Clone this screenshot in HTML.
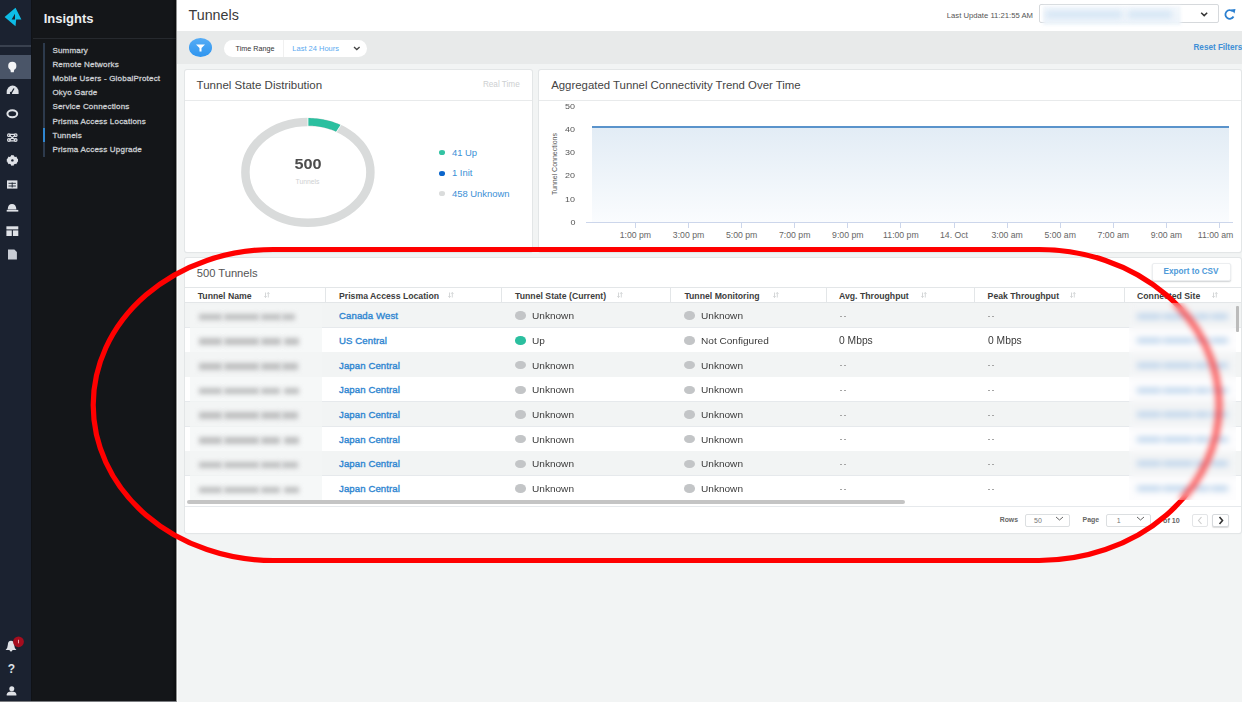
<!DOCTYPE html><html><head><meta charset="utf-8"><style>
html,body{margin:0;padding:0;width:1242px;height:702px;overflow:hidden;background:#f2f4f4;font-family:"Liberation Sans", sans-serif;}
.t{position:absolute;white-space:nowrap;font-family:"Liberation Sans", sans-serif;}
.r{position:absolute;}
svg{position:absolute;overflow:visible;}
</style></head><body><div id="root" style="position:absolute;left:0;top:0;width:1242px;height:702px;overflow:hidden;background:#f2f4f4">
<div class="r" style="left:0.00px;top:0.00px;width:31.00px;height:702.00px;background:#1b2230;"></div>
<div class="r" style="left:31.00px;top:0.00px;width:1.00px;height:702.00px;background:#101216;"></div>
<svg style="left:0;top:0" width="31" height="40"><path d="M4.6 17.1 L15.5 7.7 L21.4 19.6 L16.2 19.6 L15.5 26.2 Z M15 13.7 L11.6 19.6 L15 19.6 Z" fill="#0dbce6" fill-rule="evenodd"/></svg>
<div class="r" style="left:0.00px;top:45.00px;width:31.00px;height:2.00px;background:#39414f;"></div>
<div class="r" style="left:0.00px;top:55.10px;width:31.00px;height:23.60px;background:#4a5568;"></div>
<svg style="left:0;top:0" width="31" height="702"><circle cx="12.3" cy="65.9" r="4.1" fill="#f4f5f7"/><path d="M10.2 68.2 L14.4 68.2 L13.8 72.2 L10.8 72.2 Z" fill="#f4f5f7"/><path d="M6.7 94.1 L6.7 92 A5.9 6.4 0 0 1 18.6 92 L18.6 94.1 Z" fill="#dfe2e7"/><path d="M11 93.5 L14 88.5" stroke="#1b2230" stroke-width="1.3"/><circle cx="11" cy="93" r="1.2" fill="#1b2230"/><ellipse cx="12.3" cy="113.7" rx="4.9" ry="3.5" fill="none" stroke="#dfe2e7" stroke-width="2"/><g fill="none" stroke="#dfe2e7" stroke-width="1.2"><path d="M9.3 135.3 L15.3 139.9 M15.3 135.3 L9.3 139.9 M9.6 134.3 L15 134.3 M9.6 140.9 L15 140.9"/><circle cx="8.9" cy="135.2" r="1.3"/><circle cx="15.7" cy="135.2" r="1.3"/><circle cx="8.9" cy="140" r="1.3"/><circle cx="15.7" cy="140" r="1.3"/></g><g fill="#dfe2e7"><circle cx="12.4" cy="160.4" r="4.3"/><rect x="11" y="155.2" width="2.8" height="10.4"/><rect x="6.8" y="159" width="11.2" height="2.8"/><rect x="11" y="155.2" width="2.8" height="10.4" transform="rotate(60 12.4 160.4)"/><rect x="11" y="155.2" width="2.8" height="10.4" transform="rotate(-60 12.4 160.4)"/></g><circle cx="12.4" cy="160.4" r="1.2" fill="#1b2230"/><rect x="7" y="180.4" width="10.4" height="8.2" fill="#dfe2e7"/><path d="M8.5 183.3 L15.9 183.3 M8.5 186 L15.9 186 M12.2 182.5 L12.2 187.5" stroke="#1b2230" stroke-width="0.9"/><path d="M7.7 209.4 Q8 204 12 204 Q16 204 16.4 209.4 Z" fill="#dfe2e7"/><rect x="6.7" y="209.9" width="11.6" height="1.7" fill="#dfe2e7"/><rect x="6.4" y="226.3" width="11.9" height="3.1" fill="#dfe2e7"/><rect x="6.4" y="230.4" width="5.4" height="5.6" fill="#dfe2e7"/><rect x="12.9" y="230.4" width="5.4" height="5.6" fill="#dfe2e7"/><path d="M8 249.4 L14.4 249.4 L16.9 251.9 L16.9 259.6 L8 259.6 Z" fill="#c9cdd5"/><path d="M5.6 650 Q7.6 648.5 7.8 645 Q8 640.8 11 640.8 Q14 640.8 14.2 645 Q14.4 648.5 16.4 650 Z" fill="#dfe2e7"/><circle cx="11" cy="650.3" r="1.2" fill="#dfe2e7"/><circle cx="18.5" cy="641.8" r="5.4" fill="#a50d1e"/><rect x="18" y="639.8" width="1" height="3.5" fill="#e5a5ad"/><text x="11.3" y="673.1" font-size="12" text-anchor="middle" font-family="Liberation Sans" font-weight="700" fill="#dfe2e7">?</text><circle cx="11.8" cy="688.8" r="2.5" fill="#dfe2e7"/><path d="M6.7 695.6 L6.7 694.5 Q7 691.5 11.6 691.5 Q16.2 691.5 16.4 694.5 L16.4 695.6 Z" fill="#dfe2e7"/></svg>
<div class="r" style="left:0.00px;top:700.60px;width:31.00px;height:1.40px;background:#5a5d63;"></div>
<div class="r" style="left:32.00px;top:0.00px;width:144.00px;height:702.00px;background:#141619;"></div>
<div class="t" style="left:43.70px;top:12.00px;font-size:13px;line-height:13px;font-weight:700;color:#eceef0;">Insights</div>
<div class="r" style="left:33.00px;top:38.00px;width:143.00px;height:1.20px;background:#26292e;"></div>
<div class="r" style="left:43.30px;top:43.30px;width:1.70px;height:113.50px;background:#2d3a4c;"></div>
<div class="r" style="left:43.30px;top:128.00px;width:1.70px;height:14.00px;background:#2f86d1;"></div>
<div class="t" style="left:52.40px;top:47.00px;font-size:8.0px;line-height:8.0px;font-weight:400;color:#c9ccd0;-webkit-text-stroke:0.3px #c9ccd0;letter-spacing:0.2px;">Summary</div>
<div class="t" style="left:52.40px;top:61.10px;font-size:8.0px;line-height:8.0px;font-weight:400;color:#c9ccd0;-webkit-text-stroke:0.3px #c9ccd0;letter-spacing:0.2px;">Remote Networks</div>
<div class="t" style="left:52.40px;top:75.20px;font-size:8.0px;line-height:8.0px;font-weight:400;color:#c9ccd0;-webkit-text-stroke:0.3px #c9ccd0;letter-spacing:0.2px;">Mobile Users - GlobalProtect</div>
<div class="t" style="left:52.40px;top:89.30px;font-size:8.0px;line-height:8.0px;font-weight:400;color:#c9ccd0;-webkit-text-stroke:0.3px #c9ccd0;letter-spacing:0.2px;">Okyo Garde</div>
<div class="t" style="left:52.40px;top:103.40px;font-size:8.0px;line-height:8.0px;font-weight:400;color:#c9ccd0;-webkit-text-stroke:0.3px #c9ccd0;letter-spacing:0.2px;">Service Connections</div>
<div class="t" style="left:52.40px;top:117.50px;font-size:8.0px;line-height:8.0px;font-weight:400;color:#c9ccd0;-webkit-text-stroke:0.3px #c9ccd0;letter-spacing:0.2px;">Prisma Access Locations</div>
<div class="t" style="left:52.40px;top:131.60px;font-size:8.0px;line-height:8.0px;font-weight:400;color:#c9ccd0;-webkit-text-stroke:0.3px #c9ccd0;letter-spacing:0.2px;">Tunnels</div>
<div class="t" style="left:52.40px;top:145.70px;font-size:8.0px;line-height:8.0px;font-weight:400;color:#c9ccd0;-webkit-text-stroke:0.3px #c9ccd0;letter-spacing:0.2px;">Prisma Access Upgrade</div>
<div class="r" style="left:172px;top:0;width:4.5px;height:702px;background:linear-gradient(90deg,rgba(0,0,0,0),rgba(0,0,0,0.45))"></div>
<div class="r" style="left:176.50px;top:0.00px;width:1.10px;height:702.00px;background:#fbfcfc;"></div>
<div class="r" style="left:177.00px;top:0.00px;width:1065.00px;height:31.00px;background:#ffffff;"></div>
<div class="t" style="left:188.50px;top:8.15px;font-size:14.3px;line-height:14.3px;font-weight:400;color:#3a3a3a;">Tunnels</div>
<div class="t" style="left:946.80px;top:12.15px;font-size:7.7px;line-height:7.7px;font-weight:400;color:#555;">Last Update 11:21:55 AM</div>
<div class="r" style="left:1039.40px;top:4.30px;width:179.20px;height:18.70px;background:#fff;border:1px solid #d6d9dc;border-radius:2px;box-sizing:border-box;"></div>
<div class="r" style="left:1043px;top:6px;width:138px;height:19px;background:linear-gradient(#f4f8fc,#eef4fa);filter:blur(1.5px)"></div>
<div class="r" style="left:1046px;top:10.5px;width:76px;height:7px;background:#d3e4f4;filter:blur(3px)"></div>
<div class="r" style="left:1128px;top:10.5px;width:44px;height:7px;background:#d3e4f4;filter:blur(3px)"></div>
<svg style="left:1200px;top:11.8px" width="9" height="5"><path d="M1.2 0.8 L4.2 3.6 L7.2 0.8" fill="none" stroke="#333" stroke-width="1.5"/></svg>
<svg style="left:1223px;top:8px" width="14" height="13"><path d="M10.5 8.5 A4.3 4.3 0 1 1 9.8 3.5" fill="none" stroke="#2a7fd0" stroke-width="1.8"/><path d="M8 1.5 L12.5 1 L11.5 5.5 Z" fill="#2a7fd0"/></svg>
<div class="r" style="left:177.00px;top:31.00px;width:1065.00px;height:33.00px;background:#e8eaea;"></div>
<div class="r" style="left:188.5px;top:38.2px;width:23.7px;height:19px;border-radius:50%;background:linear-gradient(#55acf5,#2f95ef)"></div>
<svg style="left:194px;top:43px" width="13" height="10"><path d="M2 1.5 L11 1.5 L7.5 5 L7.5 8.5 L5.5 8.5 L5.5 5 Z" fill="#fff"/></svg>
<div class="r" style="left:223.80px;top:39.70px;width:143.00px;height:17.10px;background:#fff;border-radius:9px;"></div>
<div class="r" style="left:283.00px;top:39.70px;width:1.00px;height:17.10px;background:#f0f0f0;"></div>
<div class="t" style="left:235.60px;top:44.60px;font-size:7.2px;line-height:7.2px;font-weight:400;color:#333;">Time Range</div>
<div class="t" style="left:292.30px;top:45.15px;font-size:7.5px;line-height:7.5px;font-weight:400;color:#5aaaf0;">Last 24 Hours</div>
<svg style="left:352.5px;top:46.3px" width="8" height="5"><path d="M1 1 L3.8 3.6 L6.6 1" fill="none" stroke="#444" stroke-width="1.3"/></svg>
<div class="t" style="left:1193.50px;top:43.72px;font-size:8.15px;line-height:8.15px;font-weight:700;color:#3f8fd6;">Reset Filters</div>
<div class="r" style="left:184.50px;top:69.70px;width:347.50px;height:182.30px;background:#fff;border-radius:2px;box-shadow:0 0 0 1px #e3e6e7, 0 1px 1px #dcdfe0;"></div>
<div class="r" style="left:184.50px;top:99.50px;width:347.50px;height:1.20px;background:#e8eaeb;"></div>
<div class="t" style="left:196.60px;top:79.55px;font-size:11.5px;line-height:11.5px;font-weight:400;color:#444;">Tunnel State Distribution</div>
<div class="t" style="left:482.90px;top:81.00px;font-size:8.2px;line-height:8.2px;font-weight:400;color:#cdcfd1;">Real Time</div>
<svg style="left:0;top:0" width="1242" height="702"><ellipse cx="307.9" cy="172.3" rx="62.5" ry="50.4" fill="none" stroke="#d9dbdb" stroke-width="8.5"/></svg>
<svg style="left:0;top:0" width="1242" height="702"><polygon points="307.90,118.10 309.63,118.12 311.36,118.17 313.08,118.26 314.80,118.39 316.52,118.55 318.23,118.75 319.93,118.98 321.63,119.25 323.32,119.55 325.00,119.89 326.66,120.26 328.31,120.67 329.95,121.11 331.58,121.59 333.19,122.10 334.78,122.64 336.36,123.21 337.91,123.82 339.45,124.46 340.96,125.14 336.43,131.75 335.12,131.17 333.80,130.62 332.45,130.10 331.10,129.60 329.72,129.14 328.33,128.70 326.93,128.29 325.52,127.91 324.09,127.56 322.65,127.24 321.20,126.95 319.75,126.69 318.28,126.46 316.81,126.26 315.34,126.09 313.86,125.95 312.37,125.84 310.88,125.76 309.39,125.72 307.90,125.70" fill="#2bbf9f"/><line x1="307.90" y1="117.10" x2="307.90" y2="126.70" stroke="#fff" stroke-width="0.9"/><line x1="341.41" y1="124.27" x2="335.99" y2="132.62" stroke="#fff" stroke-width="0.9"/></svg>
<div class="t" style="left:307.50px;width:0;display:flex;justify-content:center;top:156.50px;font-size:14px;line-height:14px;font-weight:700;color:#4d4d4d;transform:scaleX(1.16);">500</div>
<div class="t" style="left:307.50px;width:0;display:flex;justify-content:center;top:179.00px;font-size:6.8px;line-height:6.8px;font-weight:400;color:#cfd1d2;">Tunnels</div>
<div class="r" style="left:438.8px;top:150.40px;width:6.5px;height:5.1px;border-radius:50%;background:#33c3a3"></div>
<div class="t" style="left:451.90px;top:148.08px;font-size:9.45px;line-height:9.45px;font-weight:400;color:#3b8fd6;">41 Up</div>
<div class="r" style="left:438.8px;top:170.80px;width:6.5px;height:5.1px;border-radius:50%;background:#0b66cc"></div>
<div class="t" style="left:451.90px;top:168.48px;font-size:9.45px;line-height:9.45px;font-weight:400;color:#3b8fd6;">1 Init</div>
<div class="r" style="left:438.8px;top:191.20px;width:6.5px;height:5.1px;border-radius:50%;background:#dadcdc"></div>
<div class="t" style="left:451.90px;top:188.88px;font-size:9.45px;line-height:9.45px;font-weight:400;color:#3b8fd6;">458 Unknown</div>
<div class="r" style="left:539.30px;top:69.70px;width:701.90px;height:182.30px;background:#fff;border-radius:2px;box-shadow:0 0 0 1px #e3e6e7, 0 1px 1px #dcdfe0;"></div>
<div class="r" style="left:539.30px;top:99.50px;width:701.90px;height:1.20px;background:#e8eaeb;"></div>
<div class="t" style="left:551.20px;top:80.00px;font-size:11.4px;line-height:11.4px;font-weight:400;color:#444;">Aggregated Tunnel Connectivity Trend Over Time</div>
<div class="t" style="right:667.00px;top:103.00px;font-size:8px;line-height:8px;font-weight:400;color:#555;transform:scaleX(1.12);transform-origin:100% 0;">50</div>
<div class="t" style="right:667.00px;top:126.14px;font-size:8px;line-height:8px;font-weight:400;color:#555;transform:scaleX(1.12);transform-origin:100% 0;">40</div>
<div class="t" style="right:667.00px;top:149.28px;font-size:8px;line-height:8px;font-weight:400;color:#555;transform:scaleX(1.12);transform-origin:100% 0;">30</div>
<div class="t" style="right:667.00px;top:172.42px;font-size:8px;line-height:8px;font-weight:400;color:#555;transform:scaleX(1.12);transform-origin:100% 0;">20</div>
<div class="t" style="right:667.00px;top:195.56px;font-size:8px;line-height:8px;font-weight:400;color:#555;transform:scaleX(1.12);transform-origin:100% 0;">10</div>
<div class="t" style="right:667.00px;top:218.70px;font-size:8px;line-height:8px;font-weight:400;color:#555;transform:scaleX(1.12);transform-origin:100% 0;">0</div>
<div class="t" style="left:555px;top:164px;font-size:8px;line-height:8px;color:#555;transform:translate(-50%,-50%) rotate(-90deg) scaleX(0.875);">Tunnel Connections</div>
<div class="r" style="left:591.5px;top:127px;width:637px;height:95px;background:linear-gradient(#e2ecf5,#fafcfe)"></div>
<div class="r" style="left:591.50px;top:126.40px;width:637.20px;height:1.40px;background:#5a93cb;"></div>
<div class="r" style="left:586.30px;top:221.60px;width:646.70px;height:1.00px;background:#ccd6eb;"></div>
<div class="r" style="left:634.90px;top:222.60px;width:1.00px;height:5.00px;background:#ccd6eb;"></div>
<div class="t" style="left:635.40px;width:0;display:flex;justify-content:center;top:230.55px;font-size:8.7px;line-height:8.7px;font-weight:400;color:#666;">1:00 pm</div>
<div class="r" style="left:688.00px;top:222.60px;width:1.00px;height:5.00px;background:#ccd6eb;"></div>
<div class="t" style="left:688.50px;width:0;display:flex;justify-content:center;top:230.55px;font-size:8.7px;line-height:8.7px;font-weight:400;color:#666;">3:00 pm</div>
<div class="r" style="left:741.10px;top:222.60px;width:1.00px;height:5.00px;background:#ccd6eb;"></div>
<div class="t" style="left:741.60px;width:0;display:flex;justify-content:center;top:230.55px;font-size:8.7px;line-height:8.7px;font-weight:400;color:#666;">5:00 pm</div>
<div class="r" style="left:794.20px;top:222.60px;width:1.00px;height:5.00px;background:#ccd6eb;"></div>
<div class="t" style="left:794.70px;width:0;display:flex;justify-content:center;top:230.55px;font-size:8.7px;line-height:8.7px;font-weight:400;color:#666;">7:00 pm</div>
<div class="r" style="left:847.30px;top:222.60px;width:1.00px;height:5.00px;background:#ccd6eb;"></div>
<div class="t" style="left:847.80px;width:0;display:flex;justify-content:center;top:230.55px;font-size:8.7px;line-height:8.7px;font-weight:400;color:#666;">9:00 pm</div>
<div class="r" style="left:900.40px;top:222.60px;width:1.00px;height:5.00px;background:#ccd6eb;"></div>
<div class="t" style="left:900.90px;width:0;display:flex;justify-content:center;top:230.55px;font-size:8.7px;line-height:8.7px;font-weight:400;color:#666;">11:00 pm</div>
<div class="r" style="left:953.50px;top:222.60px;width:1.00px;height:5.00px;background:#ccd6eb;"></div>
<div class="t" style="left:954.00px;width:0;display:flex;justify-content:center;top:230.55px;font-size:8.7px;line-height:8.7px;font-weight:400;color:#666;">14. Oct</div>
<div class="r" style="left:1006.60px;top:222.60px;width:1.00px;height:5.00px;background:#ccd6eb;"></div>
<div class="t" style="left:1007.10px;width:0;display:flex;justify-content:center;top:230.55px;font-size:8.7px;line-height:8.7px;font-weight:400;color:#666;">3:00 am</div>
<div class="r" style="left:1059.70px;top:222.60px;width:1.00px;height:5.00px;background:#ccd6eb;"></div>
<div class="t" style="left:1060.20px;width:0;display:flex;justify-content:center;top:230.55px;font-size:8.7px;line-height:8.7px;font-weight:400;color:#666;">5:00 am</div>
<div class="r" style="left:1112.80px;top:222.60px;width:1.00px;height:5.00px;background:#ccd6eb;"></div>
<div class="t" style="left:1113.30px;width:0;display:flex;justify-content:center;top:230.55px;font-size:8.7px;line-height:8.7px;font-weight:400;color:#666;">7:00 am</div>
<div class="r" style="left:1165.90px;top:222.60px;width:1.00px;height:5.00px;background:#ccd6eb;"></div>
<div class="t" style="left:1166.40px;width:0;display:flex;justify-content:center;top:230.55px;font-size:8.7px;line-height:8.7px;font-weight:400;color:#666;">9:00 am</div>
<div class="r" style="left:1219.00px;top:222.60px;width:1.00px;height:5.00px;background:#ccd6eb;"></div>
<div class="t" style="left:1215.50px;width:0;display:flex;justify-content:center;top:230.55px;font-size:8.7px;line-height:8.7px;font-weight:400;color:#666;">11:00 am</div>
<div class="r" style="left:184.50px;top:257.80px;width:1056.70px;height:275.60px;background:#fff;border-radius:2px;box-shadow:0 0 0 1px #e3e6e7, 0 1px 1px #dcdfe0;"></div>
<div class="t" style="left:196.70px;top:268.00px;font-size:11.2px;line-height:11.2px;font-weight:400;color:#555;">500 Tunnels</div>
<div class="r" style="left:1151.70px;top:262.90px;width:79.30px;height:17.70px;background:#fff;border:1px solid #eceef0;border-radius:2px;box-sizing:border-box;box-shadow:0 1px 1.5px #cfd2d4;"></div>
<div class="t" style="left:1163.50px;top:268.20px;font-size:8.2px;line-height:8.2px;font-weight:700;color:#4f9ad9;">Export to CSV</div>
<div class="r" style="left:184.50px;top:286.70px;width:1056.70px;height:1.00px;background:#e3e6e8;"></div>
<div class="r" style="left:184.50px;top:302.50px;width:1056.70px;height:1.00px;background:#e3e6e8;"></div>
<div class="r" style="left:325.10px;top:287.70px;width:1.00px;height:14.80px;background:#e3e6e8;"></div>
<div class="r" style="left:501.10px;top:287.70px;width:1.00px;height:14.80px;background:#e3e6e8;"></div>
<div class="r" style="left:669.70px;top:287.70px;width:1.00px;height:14.80px;background:#e3e6e8;"></div>
<div class="r" style="left:825.90px;top:287.70px;width:1.00px;height:14.80px;background:#e3e6e8;"></div>
<div class="r" style="left:974.00px;top:287.70px;width:1.00px;height:14.80px;background:#e3e6e8;"></div>
<div class="r" style="left:1123.50px;top:287.70px;width:1.00px;height:14.80px;background:#e3e6e8;"></div>
<div class="t" style="left:197.70px;top:291.85px;font-size:8.7px;line-height:8.7px;font-weight:700;color:#3d3d3d;">Tunnel Name</div>
<svg style="left:264.10px;top:292.4px" width="6" height="6"><path d="M1.5 0.5 L1.5 5.5 M0.3 4.2 L1.5 5.5 L2.7 4.2 M4.3 5.5 L4.3 0.5 M3.1 1.8 L4.3 0.5 L5.5 1.8" fill="none" stroke="#d0d2d4" stroke-width="0.9"/></svg>
<div class="t" style="left:339.00px;top:291.85px;font-size:8.7px;line-height:8.7px;font-weight:700;color:#3d3d3d;">Prisma Access Location</div>
<svg style="left:448.40px;top:292.4px" width="6" height="6"><path d="M1.5 0.5 L1.5 5.5 M0.3 4.2 L1.5 5.5 L2.7 4.2 M4.3 5.5 L4.3 0.5 M3.1 1.8 L4.3 0.5 L5.5 1.8" fill="none" stroke="#d0d2d4" stroke-width="0.9"/></svg>
<div class="t" style="left:515.10px;top:291.85px;font-size:8.7px;line-height:8.7px;font-weight:700;color:#3d3d3d;">Tunnel State (Current)</div>
<svg style="left:617.30px;top:292.4px" width="6" height="6"><path d="M1.5 0.5 L1.5 5.5 M0.3 4.2 L1.5 5.5 L2.7 4.2 M4.3 5.5 L4.3 0.5 M3.1 1.8 L4.3 0.5 L5.5 1.8" fill="none" stroke="#d0d2d4" stroke-width="0.9"/></svg>
<div class="t" style="left:684.40px;top:291.85px;font-size:8.7px;line-height:8.7px;font-weight:700;color:#3d3d3d;">Tunnel Monitoring</div>
<svg style="left:772.50px;top:292.4px" width="6" height="6"><path d="M1.5 0.5 L1.5 5.5 M0.3 4.2 L1.5 5.5 L2.7 4.2 M4.3 5.5 L4.3 0.5 M3.1 1.8 L4.3 0.5 L5.5 1.8" fill="none" stroke="#d0d2d4" stroke-width="0.9"/></svg>
<div class="t" style="left:839.00px;top:291.85px;font-size:8.7px;line-height:8.7px;font-weight:700;color:#3d3d3d;">Avg. Throughput</div>
<svg style="left:921.30px;top:292.4px" width="6" height="6"><path d="M1.5 0.5 L1.5 5.5 M0.3 4.2 L1.5 5.5 L2.7 4.2 M4.3 5.5 L4.3 0.5 M3.1 1.8 L4.3 0.5 L5.5 1.8" fill="none" stroke="#d0d2d4" stroke-width="0.9"/></svg>
<div class="t" style="left:987.60px;top:291.85px;font-size:8.7px;line-height:8.7px;font-weight:700;color:#3d3d3d;">Peak Throughput</div>
<svg style="left:1070.30px;top:292.4px" width="6" height="6"><path d="M1.5 0.5 L1.5 5.5 M0.3 4.2 L1.5 5.5 L2.7 4.2 M4.3 5.5 L4.3 0.5 M3.1 1.8 L4.3 0.5 L5.5 1.8" fill="none" stroke="#d0d2d4" stroke-width="0.9"/></svg>
<div class="t" style="left:1137.00px;top:291.85px;font-size:8.7px;line-height:8.7px;font-weight:700;color:#3d3d3d;">Connected Site</div>
<svg style="left:1212.10px;top:292.4px" width="6" height="6"><path d="M1.5 0.5 L1.5 5.5 M0.3 4.2 L1.5 5.5 L2.7 4.2 M4.3 5.5 L4.3 0.5 M3.1 1.8 L4.3 0.5 L5.5 1.8" fill="none" stroke="#d0d2d4" stroke-width="0.9"/></svg>
<div class="r" style="left:184.50px;top:303.00px;width:1056.70px;height:24.70px;background:#f2f4f4;"></div>
<div class="r" style="left:184.50px;top:327.10px;width:1056.70px;height:1.00px;background:#e6e9ec;"></div>
<div class="r" style="left:184.50px;top:327.70px;width:1056.70px;height:24.70px;background:#ffffff;"></div>
<div class="r" style="left:184.50px;top:351.80px;width:1056.70px;height:1.00px;background:#e6e9ec;"></div>
<div class="r" style="left:184.50px;top:352.40px;width:1056.70px;height:24.70px;background:#f2f4f4;"></div>
<div class="r" style="left:184.50px;top:376.50px;width:1056.70px;height:1.00px;background:#e6e9ec;"></div>
<div class="r" style="left:184.50px;top:377.10px;width:1056.70px;height:24.70px;background:#ffffff;"></div>
<div class="r" style="left:184.50px;top:401.20px;width:1056.70px;height:1.00px;background:#e6e9ec;"></div>
<div class="r" style="left:184.50px;top:401.80px;width:1056.70px;height:24.70px;background:#f2f4f4;"></div>
<div class="r" style="left:184.50px;top:425.90px;width:1056.70px;height:1.00px;background:#e6e9ec;"></div>
<div class="r" style="left:184.50px;top:426.50px;width:1056.70px;height:24.70px;background:#ffffff;"></div>
<div class="r" style="left:184.50px;top:450.60px;width:1056.70px;height:1.00px;background:#e6e9ec;"></div>
<div class="r" style="left:184.50px;top:451.20px;width:1056.70px;height:24.70px;background:#f2f4f4;"></div>
<div class="r" style="left:184.50px;top:475.30px;width:1056.70px;height:1.00px;background:#e6e9ec;"></div>
<div class="r" style="left:184.50px;top:475.90px;width:1056.70px;height:24.70px;background:#ffffff;"></div>
<div class="r" style="left:184.50px;top:500.00px;width:1056.70px;height:1.00px;background:#e6e9ec;"></div>
<div class="r" style="left:184.50px;top:302.40px;width:1056.70px;height:1.00px;background:#e3e6e8;"></div>
<div class="r" style="left:190px;top:305px;width:132px;height:194.5px;background:rgba(243,245,245,0.75)"></div>
<div class="r" style="left:198.50px;top:313.60px;width:23px;height:6.5px;background:#bdbebf;filter:blur(2.6px)"></div>
<div class="r" style="left:223.50px;top:313.60px;width:35px;height:6.5px;background:#bdbebf;filter:blur(2.6px)"></div>
<div class="r" style="left:260.50px;top:313.60px;width:20px;height:6.5px;background:#bdbebf;filter:blur(2.6px)"></div>
<div class="r" style="left:281.50px;top:313.60px;width:13px;height:6.5px;background:#bdbebf;filter:blur(2.6px)"></div>
<div class="t" style="left:339.00px;top:311.10px;font-size:9.6px;line-height:9.6px;font-weight:400;color:#2f86d1;-webkit-text-stroke:0.35px #2f86d1;letter-spacing:0.1px;">Canada West</div>
<div class="r" style="left:515px;top:311.40px;width:10.5px;height:8.5px;border-radius:50%;background:#c3c5c7"></div>
<div class="t" style="left:531.60px;top:311.25px;font-size:9.9px;line-height:9.9px;font-weight:400;color:#3a3a3a;transform:scaleX(1.02);transform-origin:0 0;">Unknown</div>
<div class="r" style="left:684.4px;top:311.40px;width:10.5px;height:8.5px;border-radius:50%;background:#c3c5c7"></div>
<div class="t" style="left:701.40px;top:311.25px;font-size:9.9px;line-height:9.9px;font-weight:400;color:#3a3a3a;transform:scaleX(1.02);transform-origin:0 0;">Unknown</div>
<div class="r" style="left:839.60px;top:315.90px;width:2.00px;height:1.00px;background:#a5a5a5;"></div>
<div class="r" style="left:843.60px;top:315.90px;width:2.00px;height:1.00px;background:#a5a5a5;"></div>
<div class="r" style="left:988.20px;top:315.90px;width:2.00px;height:1.00px;background:#a5a5a5;"></div>
<div class="r" style="left:992.20px;top:315.90px;width:2.00px;height:1.00px;background:#a5a5a5;"></div>
<div class="r" style="left:198.50px;top:338.30px;width:23px;height:6.5px;background:#bdbebf;filter:blur(2.6px)"></div>
<div class="r" style="left:223.50px;top:338.30px;width:35px;height:6.5px;background:#bdbebf;filter:blur(2.6px)"></div>
<div class="r" style="left:260.50px;top:338.30px;width:20px;height:6.5px;background:#bdbebf;filter:blur(2.6px)"></div>
<div class="r" style="left:283.50px;top:338.30px;width:15px;height:6.5px;background:#bdbebf;filter:blur(2.6px)"></div>
<div class="t" style="left:339.00px;top:335.80px;font-size:9.6px;line-height:9.6px;font-weight:400;color:#2f86d1;-webkit-text-stroke:0.35px #2f86d1;letter-spacing:0.1px;">US Central</div>
<div class="r" style="left:515px;top:336.10px;width:10.5px;height:8.5px;border-radius:50%;background:#2bbf9f"></div>
<div class="t" style="left:531.60px;top:335.95px;font-size:9.9px;line-height:9.9px;font-weight:400;color:#3a3a3a;transform:scaleX(1.02);transform-origin:0 0;">Up</div>
<div class="r" style="left:684.4px;top:336.10px;width:10.5px;height:8.5px;border-radius:50%;background:#c3c5c7"></div>
<div class="t" style="left:701.40px;top:335.95px;font-size:9.9px;line-height:9.9px;font-weight:400;color:#3a3a3a;transform:scaleX(1.02);transform-origin:0 0;">Not Configured</div>
<div class="t" style="left:839.00px;top:335.85px;font-size:10.1px;line-height:10.1px;font-weight:400;color:#3a3a3a;transform:scaleX(1.02);transform-origin:0 0;">0 Mbps</div>
<div class="t" style="left:987.60px;top:335.85px;font-size:10.1px;line-height:10.1px;font-weight:400;color:#3a3a3a;transform:scaleX(1.02);transform-origin:0 0;">0 Mbps</div>
<div class="r" style="left:198.50px;top:363.00px;width:23px;height:6.5px;background:#bdbebf;filter:blur(2.6px)"></div>
<div class="r" style="left:223.50px;top:363.00px;width:35px;height:6.5px;background:#bdbebf;filter:blur(2.6px)"></div>
<div class="r" style="left:260.50px;top:363.00px;width:20px;height:6.5px;background:#bdbebf;filter:blur(2.6px)"></div>
<div class="r" style="left:281.50px;top:363.00px;width:16px;height:6.5px;background:#bdbebf;filter:blur(2.6px)"></div>
<div class="t" style="left:339.00px;top:360.50px;font-size:9.6px;line-height:9.6px;font-weight:400;color:#2f86d1;-webkit-text-stroke:0.35px #2f86d1;letter-spacing:0.1px;">Japan Central</div>
<div class="r" style="left:515px;top:360.80px;width:10.5px;height:8.5px;border-radius:50%;background:#c3c5c7"></div>
<div class="t" style="left:531.60px;top:360.65px;font-size:9.9px;line-height:9.9px;font-weight:400;color:#3a3a3a;transform:scaleX(1.02);transform-origin:0 0;">Unknown</div>
<div class="r" style="left:684.4px;top:360.80px;width:10.5px;height:8.5px;border-radius:50%;background:#c3c5c7"></div>
<div class="t" style="left:701.40px;top:360.65px;font-size:9.9px;line-height:9.9px;font-weight:400;color:#3a3a3a;transform:scaleX(1.02);transform-origin:0 0;">Unknown</div>
<div class="r" style="left:839.60px;top:365.30px;width:2.00px;height:1.00px;background:#a5a5a5;"></div>
<div class="r" style="left:843.60px;top:365.30px;width:2.00px;height:1.00px;background:#a5a5a5;"></div>
<div class="r" style="left:988.20px;top:365.30px;width:2.00px;height:1.00px;background:#a5a5a5;"></div>
<div class="r" style="left:992.20px;top:365.30px;width:2.00px;height:1.00px;background:#a5a5a5;"></div>
<div class="r" style="left:198.50px;top:387.70px;width:23px;height:6.5px;background:#bdbebf;filter:blur(2.6px)"></div>
<div class="r" style="left:223.50px;top:387.70px;width:35px;height:6.5px;background:#bdbebf;filter:blur(2.6px)"></div>
<div class="r" style="left:260.50px;top:387.70px;width:19px;height:6.5px;background:#bdbebf;filter:blur(2.6px)"></div>
<div class="r" style="left:283.50px;top:387.70px;width:15px;height:6.5px;background:#bdbebf;filter:blur(2.6px)"></div>
<div class="t" style="left:339.00px;top:385.20px;font-size:9.6px;line-height:9.6px;font-weight:400;color:#2f86d1;-webkit-text-stroke:0.35px #2f86d1;letter-spacing:0.1px;">Japan Central</div>
<div class="r" style="left:515px;top:385.50px;width:10.5px;height:8.5px;border-radius:50%;background:#c3c5c7"></div>
<div class="t" style="left:531.60px;top:385.35px;font-size:9.9px;line-height:9.9px;font-weight:400;color:#3a3a3a;transform:scaleX(1.02);transform-origin:0 0;">Unknown</div>
<div class="r" style="left:684.4px;top:385.50px;width:10.5px;height:8.5px;border-radius:50%;background:#c3c5c7"></div>
<div class="t" style="left:701.40px;top:385.35px;font-size:9.9px;line-height:9.9px;font-weight:400;color:#3a3a3a;transform:scaleX(1.02);transform-origin:0 0;">Unknown</div>
<div class="r" style="left:839.60px;top:390.00px;width:2.00px;height:1.00px;background:#a5a5a5;"></div>
<div class="r" style="left:843.60px;top:390.00px;width:2.00px;height:1.00px;background:#a5a5a5;"></div>
<div class="r" style="left:988.20px;top:390.00px;width:2.00px;height:1.00px;background:#a5a5a5;"></div>
<div class="r" style="left:992.20px;top:390.00px;width:2.00px;height:1.00px;background:#a5a5a5;"></div>
<div class="r" style="left:198.50px;top:412.40px;width:23px;height:6.5px;background:#bdbebf;filter:blur(2.6px)"></div>
<div class="r" style="left:223.50px;top:412.40px;width:35px;height:6.5px;background:#bdbebf;filter:blur(2.6px)"></div>
<div class="r" style="left:260.50px;top:412.40px;width:20px;height:6.5px;background:#bdbebf;filter:blur(2.6px)"></div>
<div class="r" style="left:281.50px;top:412.40px;width:16px;height:6.5px;background:#bdbebf;filter:blur(2.6px)"></div>
<div class="t" style="left:339.00px;top:409.90px;font-size:9.6px;line-height:9.6px;font-weight:400;color:#2f86d1;-webkit-text-stroke:0.35px #2f86d1;letter-spacing:0.1px;">Japan Central</div>
<div class="r" style="left:515px;top:410.20px;width:10.5px;height:8.5px;border-radius:50%;background:#c3c5c7"></div>
<div class="t" style="left:531.60px;top:410.05px;font-size:9.9px;line-height:9.9px;font-weight:400;color:#3a3a3a;transform:scaleX(1.02);transform-origin:0 0;">Unknown</div>
<div class="r" style="left:684.4px;top:410.20px;width:10.5px;height:8.5px;border-radius:50%;background:#c3c5c7"></div>
<div class="t" style="left:701.40px;top:410.05px;font-size:9.9px;line-height:9.9px;font-weight:400;color:#3a3a3a;transform:scaleX(1.02);transform-origin:0 0;">Unknown</div>
<div class="r" style="left:839.60px;top:414.70px;width:2.00px;height:1.00px;background:#a5a5a5;"></div>
<div class="r" style="left:843.60px;top:414.70px;width:2.00px;height:1.00px;background:#a5a5a5;"></div>
<div class="r" style="left:988.20px;top:414.70px;width:2.00px;height:1.00px;background:#a5a5a5;"></div>
<div class="r" style="left:992.20px;top:414.70px;width:2.00px;height:1.00px;background:#a5a5a5;"></div>
<div class="r" style="left:198.50px;top:437.10px;width:23px;height:6.5px;background:#bdbebf;filter:blur(2.6px)"></div>
<div class="r" style="left:223.50px;top:437.10px;width:35px;height:6.5px;background:#bdbebf;filter:blur(2.6px)"></div>
<div class="r" style="left:260.50px;top:437.10px;width:19px;height:6.5px;background:#bdbebf;filter:blur(2.6px)"></div>
<div class="r" style="left:283.50px;top:437.10px;width:15px;height:6.5px;background:#bdbebf;filter:blur(2.6px)"></div>
<div class="t" style="left:339.00px;top:434.60px;font-size:9.6px;line-height:9.6px;font-weight:400;color:#2f86d1;-webkit-text-stroke:0.35px #2f86d1;letter-spacing:0.1px;">Japan Central</div>
<div class="r" style="left:515px;top:434.90px;width:10.5px;height:8.5px;border-radius:50%;background:#c3c5c7"></div>
<div class="t" style="left:531.60px;top:434.75px;font-size:9.9px;line-height:9.9px;font-weight:400;color:#3a3a3a;transform:scaleX(1.02);transform-origin:0 0;">Unknown</div>
<div class="r" style="left:684.4px;top:434.90px;width:10.5px;height:8.5px;border-radius:50%;background:#c3c5c7"></div>
<div class="t" style="left:701.40px;top:434.75px;font-size:9.9px;line-height:9.9px;font-weight:400;color:#3a3a3a;transform:scaleX(1.02);transform-origin:0 0;">Unknown</div>
<div class="r" style="left:839.60px;top:439.40px;width:2.00px;height:1.00px;background:#a5a5a5;"></div>
<div class="r" style="left:843.60px;top:439.40px;width:2.00px;height:1.00px;background:#a5a5a5;"></div>
<div class="r" style="left:988.20px;top:439.40px;width:2.00px;height:1.00px;background:#a5a5a5;"></div>
<div class="r" style="left:992.20px;top:439.40px;width:2.00px;height:1.00px;background:#a5a5a5;"></div>
<div class="r" style="left:198.50px;top:461.80px;width:23px;height:6.5px;background:#bdbebf;filter:blur(2.6px)"></div>
<div class="r" style="left:223.50px;top:461.80px;width:35px;height:6.5px;background:#bdbebf;filter:blur(2.6px)"></div>
<div class="r" style="left:260.50px;top:461.80px;width:20px;height:6.5px;background:#bdbebf;filter:blur(2.6px)"></div>
<div class="r" style="left:281.50px;top:461.80px;width:16px;height:6.5px;background:#bdbebf;filter:blur(2.6px)"></div>
<div class="t" style="left:339.00px;top:459.30px;font-size:9.6px;line-height:9.6px;font-weight:400;color:#2f86d1;-webkit-text-stroke:0.35px #2f86d1;letter-spacing:0.1px;">Japan Central</div>
<div class="r" style="left:515px;top:459.60px;width:10.5px;height:8.5px;border-radius:50%;background:#c3c5c7"></div>
<div class="t" style="left:531.60px;top:459.45px;font-size:9.9px;line-height:9.9px;font-weight:400;color:#3a3a3a;transform:scaleX(1.02);transform-origin:0 0;">Unknown</div>
<div class="r" style="left:684.4px;top:459.60px;width:10.5px;height:8.5px;border-radius:50%;background:#c3c5c7"></div>
<div class="t" style="left:701.40px;top:459.45px;font-size:9.9px;line-height:9.9px;font-weight:400;color:#3a3a3a;transform:scaleX(1.02);transform-origin:0 0;">Unknown</div>
<div class="r" style="left:839.60px;top:464.10px;width:2.00px;height:1.00px;background:#a5a5a5;"></div>
<div class="r" style="left:843.60px;top:464.10px;width:2.00px;height:1.00px;background:#a5a5a5;"></div>
<div class="r" style="left:988.20px;top:464.10px;width:2.00px;height:1.00px;background:#a5a5a5;"></div>
<div class="r" style="left:992.20px;top:464.10px;width:2.00px;height:1.00px;background:#a5a5a5;"></div>
<div class="r" style="left:198.50px;top:486.50px;width:23px;height:6.5px;background:#bdbebf;filter:blur(2.6px)"></div>
<div class="r" style="left:223.50px;top:486.50px;width:35px;height:6.5px;background:#bdbebf;filter:blur(2.6px)"></div>
<div class="r" style="left:260.50px;top:486.50px;width:19px;height:6.5px;background:#bdbebf;filter:blur(2.6px)"></div>
<div class="r" style="left:283.50px;top:486.50px;width:15px;height:6.5px;background:#bdbebf;filter:blur(2.6px)"></div>
<div class="t" style="left:339.00px;top:484.00px;font-size:9.6px;line-height:9.6px;font-weight:400;color:#2f86d1;-webkit-text-stroke:0.35px #2f86d1;letter-spacing:0.1px;">Japan Central</div>
<div class="r" style="left:515px;top:484.30px;width:10.5px;height:8.5px;border-radius:50%;background:#c3c5c7"></div>
<div class="t" style="left:531.60px;top:484.15px;font-size:9.9px;line-height:9.9px;font-weight:400;color:#3a3a3a;transform:scaleX(1.02);transform-origin:0 0;">Unknown</div>
<div class="r" style="left:684.4px;top:484.30px;width:10.5px;height:8.5px;border-radius:50%;background:#c3c5c7"></div>
<div class="t" style="left:701.40px;top:484.15px;font-size:9.9px;line-height:9.9px;font-weight:400;color:#3a3a3a;transform:scaleX(1.02);transform-origin:0 0;">Unknown</div>
<div class="r" style="left:839.60px;top:488.80px;width:2.00px;height:1.00px;background:#a5a5a5;"></div>
<div class="r" style="left:843.60px;top:488.80px;width:2.00px;height:1.00px;background:#a5a5a5;"></div>
<div class="r" style="left:988.20px;top:488.80px;width:2.00px;height:1.00px;background:#a5a5a5;"></div>
<div class="r" style="left:992.20px;top:488.80px;width:2.00px;height:1.00px;background:#a5a5a5;"></div>
<div class="r" style="left:184.50px;top:499.50px;width:1056.70px;height:6.50px;background:#fff;"></div>
<div class="r" style="left:186.70px;top:499.80px;width:718.30px;height:3.90px;background:#c4c4c4;border-radius:2px;"></div>
<div class="r" style="left:184.50px;top:505.50px;width:1056.70px;height:0.80px;background:#e6e9ec;"></div>
<div class="t" style="left:999.70px;top:517.18px;font-size:6.85px;line-height:6.85px;font-weight:700;color:#666;">Rows</div>
<div class="r" style="left:1024.80px;top:513.50px;width:45.40px;height:13.00px;background:#fff;border:1px solid #dcdfe1;border-radius:2px;box-sizing:border-box;"></div>
<div class="t" style="left:1034.00px;top:516.60px;font-size:7px;line-height:7px;font-weight:400;color:#777;">50</div>
<svg style="left:1055px;top:516.3px" width="9" height="6"><path d="M1 1 L4.5 4 L8 1" fill="none" stroke="#666" stroke-width="1"/></svg>
<div class="t" style="left:1082.60px;top:517.12px;font-size:6.95px;line-height:6.95px;font-weight:700;color:#666;">Page</div>
<div class="r" style="left:1105.80px;top:513.50px;width:45.40px;height:13.00px;background:#fff;border:1px solid #dcdfe1;border-radius:2px;box-sizing:border-box;"></div>
<div class="t" style="left:1116.80px;top:516.60px;font-size:7px;line-height:7px;font-weight:400;color:#777;">1</div>
<svg style="left:1136px;top:516.3px" width="9" height="6"><path d="M1 1 L4.5 4 L8 1" fill="none" stroke="#666" stroke-width="1"/></svg>
<div class="t" style="left:1163.00px;top:516.70px;font-size:7.2px;line-height:7.2px;font-weight:700;color:#666;">of 10</div>
<div class="r" style="left:1191.50px;top:513.50px;width:16.50px;height:13.50px;background:#fff;border:1px solid #e3e5e7;border-radius:2px;box-sizing:border-box;"></div>
<svg style="left:1197px;top:516px" width="6" height="9"><path d="M4.5 1 L1.5 4.5 L4.5 8" fill="none" stroke="#ccc" stroke-width="1.1"/></svg>
<div class="r" style="left:1212.10px;top:513.50px;width:17.10px;height:13.50px;background:#fff;border:1px solid #d6d9dc;border-radius:2px;box-sizing:border-box;box-shadow:0 1px 1px #ddd;"></div>
<svg style="left:1218px;top:516px" width="6" height="9"><path d="M1.5 1 L4.5 4.5 L1.5 8" fill="none" stroke="#333" stroke-width="1.6"/></svg>
<div class="r" style="left:1137px;top:313.70px;width:24px;height:5px;background:#a6c6e6;"></div>
<div class="r" style="left:1163px;top:313.70px;width:30px;height:5px;background:#a6c6e6;"></div>
<div class="r" style="left:1195px;top:313.70px;width:14px;height:5px;background:#a6c6e6;"></div>
<div class="r" style="left:1211px;top:313.70px;width:17px;height:5px;background:#a6c6e6;"></div>
<div class="r" style="left:1137px;top:338.30px;width:24px;height:5px;background:#a6c6e6;"></div>
<div class="r" style="left:1163px;top:338.30px;width:30px;height:5px;background:#a6c6e6;"></div>
<div class="r" style="left:1195px;top:338.30px;width:14px;height:5px;background:#a6c6e6;"></div>
<div class="r" style="left:1211px;top:338.30px;width:17px;height:5px;background:#a6c6e6;"></div>
<div class="r" style="left:1137px;top:362.90px;width:24px;height:5px;background:#a6c6e6;"></div>
<div class="r" style="left:1163px;top:362.90px;width:30px;height:5px;background:#a6c6e6;"></div>
<div class="r" style="left:1195px;top:362.90px;width:14px;height:5px;background:#a6c6e6;"></div>
<div class="r" style="left:1211px;top:362.90px;width:17px;height:5px;background:#a6c6e6;"></div>
<div class="r" style="left:1137px;top:387.50px;width:24px;height:5px;background:#a6c6e6;"></div>
<div class="r" style="left:1163px;top:387.50px;width:30px;height:5px;background:#a6c6e6;"></div>
<div class="r" style="left:1195px;top:387.50px;width:14px;height:5px;background:#a6c6e6;"></div>
<div class="r" style="left:1211px;top:387.50px;width:17px;height:5px;background:#a6c6e6;"></div>
<div class="r" style="left:1137px;top:412.10px;width:24px;height:5px;background:#a6c6e6;"></div>
<div class="r" style="left:1163px;top:412.10px;width:30px;height:5px;background:#a6c6e6;"></div>
<div class="r" style="left:1195px;top:412.10px;width:14px;height:5px;background:#a6c6e6;"></div>
<div class="r" style="left:1211px;top:412.10px;width:17px;height:5px;background:#a6c6e6;"></div>
<div class="r" style="left:1137px;top:436.70px;width:24px;height:5px;background:#a6c6e6;"></div>
<div class="r" style="left:1163px;top:436.70px;width:30px;height:5px;background:#a6c6e6;"></div>
<div class="r" style="left:1195px;top:436.70px;width:14px;height:5px;background:#a6c6e6;"></div>
<div class="r" style="left:1211px;top:436.70px;width:17px;height:5px;background:#a6c6e6;"></div>
<div class="r" style="left:1137px;top:461.30px;width:24px;height:5px;background:#a6c6e6;"></div>
<div class="r" style="left:1163px;top:461.30px;width:30px;height:5px;background:#a6c6e6;"></div>
<div class="r" style="left:1195px;top:461.30px;width:14px;height:5px;background:#a6c6e6;"></div>
<div class="r" style="left:1211px;top:461.30px;width:17px;height:5px;background:#a6c6e6;"></div>
<div class="r" style="left:1137px;top:485.90px;width:24px;height:5px;background:#a6c6e6;"></div>
<div class="r" style="left:1163px;top:485.90px;width:30px;height:5px;background:#a6c6e6;"></div>
<div class="r" style="left:1195px;top:485.90px;width:14px;height:5px;background:#a6c6e6;"></div>
<div class="r" style="left:1211px;top:485.90px;width:17px;height:5px;background:#a6c6e6;"></div>
<svg style="left:0;top:0" width="1242" height="702"><rect x="93.2" y="249.5" width="1126" height="311" rx="180" ry="155.5" fill="none" stroke="#ff0000" stroke-width="5.2"/></svg>
<div class="r" style="left:1129.4px;top:302.5px;width:106.5px;height:197px;background:rgba(244,247,250,0.22);backdrop-filter:blur(3px);-webkit-backdrop-filter:blur(3px)"></div>
<div class="r" style="left:1235.50px;top:305.70px;width:3.00px;height:26.60px;background:#bbbbbb;border-radius:1px;"></div>
<div class="r" style="left:0.00px;top:701.00px;width:176.00px;height:1.00px;background:#7a7c80;"></div>
</div></body></html>
